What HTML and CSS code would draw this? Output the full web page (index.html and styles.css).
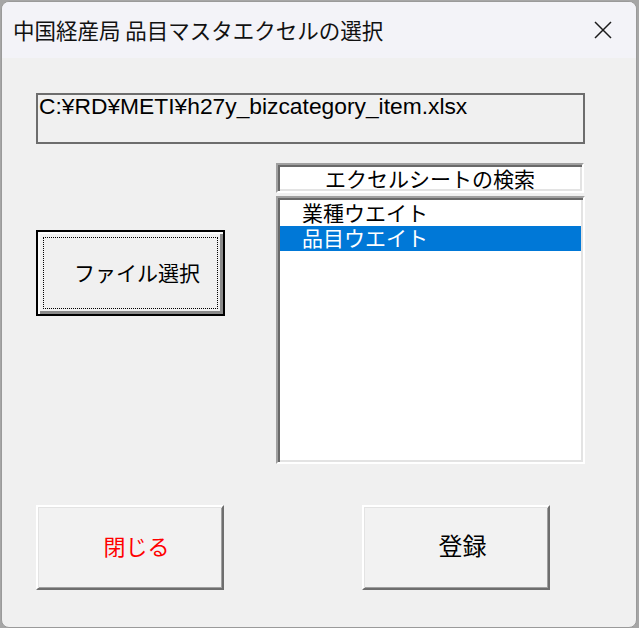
FILE: index.html
```html
<!DOCTYPE html>
<html lang="ja">
<head>
    <meta charset="UTF-8">
    <meta name="viewport" content="width=device-width, initial-scale=1.0">
    <title>中国経産局 品目マスタエクセルの選択</title>
    <link rel="stylesheet" href="styles.css">
</head>
<body>
    <div class="window">
        <div class="titlebar">
            <span class="title">中国経産局 品目マスタエクセルの選択</span>
            <svg class="close-icon" width="18" height="18" viewBox="0 0 18 18">
                <path d="M1 1 L17 17 M17 1 L1 17" stroke="#1b1b1b" stroke-width="1.5" fill="none"/>
            </svg>
        </div>
        <div class="content">
            <div class="path-box">C:¥RD¥METI¥h27y_bizcategory_item.xlsx</div>

            <div class="middle">
                <div class="left-col">
                    <button class="btn btn-file">ファイル選択</button>
                </div>
                <div class="right-col">
                    <div class="sheet-label sunken">エクセルシートの検索</div>
                    <ul class="sheet-list sunken">
                        <li class="sheet-item">業種ウエイト</li>
                        <li class="sheet-item selected">品目ウエイト</li>
                    </ul>
                </div>
            </div>

            <div class="actions">
                <button class="btn btn-3d btn-close">閉じる</button>
                <button class="btn btn-3d btn-save">登録</button>
            </div>
        </div>
    </div>
</body>
</html>
```

FILE: styles.css
```css
body {
    margin: 0;
    background-color: #a6a6a6;
    font-family: "Noto Sans CJK JP", "Noto Sans", sans-serif;
}
.window {
    box-sizing: border-box;
    width: 636px;
    height: 627px;
    margin: 1px 0 0 1px;
    border: 1px solid #9a9a9a;
    border-radius: 8px;
    overflow: hidden;
    background-color: #f0f0f0;
}
.titlebar {
    height: 56px;
    display: flex;
    align-items: center;
    justify-content: space-between;
    padding: 0 24px 0 11px;
    background-color: #f3f3f8;
}
.title {
    font-size: 21.5px;
    line-height: 26px;
    color: #111;
}
.close-icon {
    display: block;
}
.content {
    padding: 35px 0 0 34px;
}
.path-box {
    box-sizing: border-box;
    width: 549px;
    height: 51px;
    border: 2px solid #6d6d6d;
    padding: 0 0 0 1px;
    font-family: "Liberation Sans", Arial, sans-serif;
    font-size: 22.8px;
    line-height: 22px;
    color: #000;
}
.middle {
    display: flex;
    gap: 51px;
    margin-top: 19px;
}
.left-col {
    width: 189px;
    padding-top: 67px;
}
.right-col {
    width: 309px;
}
.sunken {
    box-sizing: border-box;
    border: 2px solid;
    border-color: #a0a0a0 #fff #fff #a0a0a0;
    box-shadow: inset 2px 2px 0 #696969, inset -2px -2px 0 #e3e3e3;
    background-color: #fff;
}
.sheet-label {
    width: 308px;
    height: 30px;
    text-align: center;
    font-size: 21px;
    line-height: 27px;
    color: #000;
}
.sheet-list {
    list-style: none;
    margin: 3px 0 0;
    height: 268px;
    padding: 3px 2px 2px;
}
.sheet-item {
    height: 25px;
    padding-left: 22px;
    font-size: 21px;
    line-height: 23px;
    color: #000;
}
.sheet-item.selected {
    background-color: #0078d7;
    color: #fff;
}
.btn {
    box-sizing: border-box;
    font-family: "Noto Sans CJK JP", "Noto Sans", sans-serif;
    font-size: 21px;
    color: #000;
    background-color: #f0f0f0;
    padding: 0 0 3px 13px;
    margin: 0;
    cursor: pointer;
}
.btn-file {
    width: 189px;
    height: 86px;
    border: 2px solid #000;
    box-shadow: inset 2px 2px 0 #fcfcfc, inset -3px -3px 0 #8a8a8a;
    outline: 1px dotted #000;
    outline-offset: -8px;
}
.actions {
    display: flex;
    gap: 138px;
    margin-top: 41px;
}
.btn-3d {
    width: 188px;
    height: 85px;
    border: 2px solid;
    border-color: #fff #6e6e6e #6e6e6e #fff;
    box-shadow: inset 1px 1px 0 #e3e3e3, inset -1px -1px 0 #a0a0a0;
    background-color: #f2f2f2;
    font-size: 22px;
    padding-bottom: 6px;
}
.btn-close {
    color: #ff0000;
}
.btn-save {
    font-size: 24px;
}
```
